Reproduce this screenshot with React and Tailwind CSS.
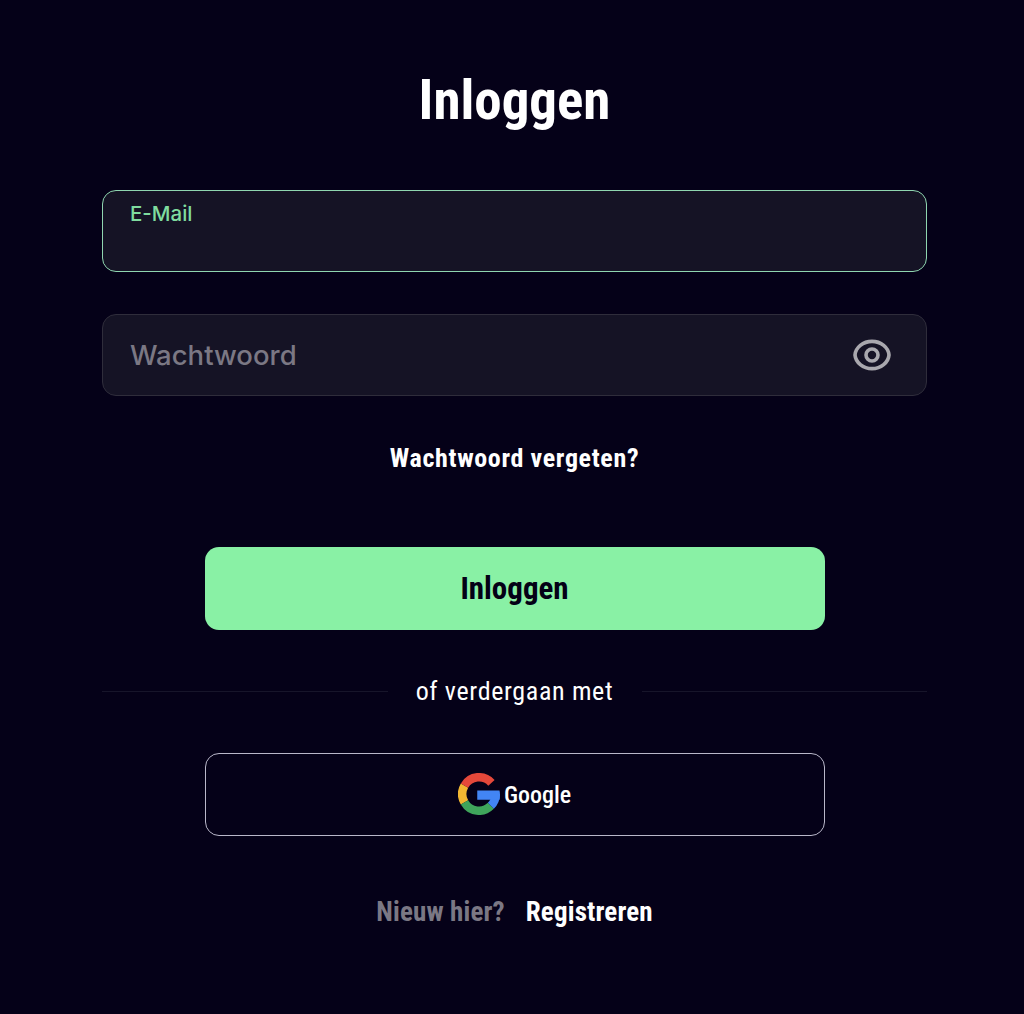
import React, { useState } from 'react';

const EyeIcon = () => (
    <svg width="38" height="38" viewBox="0 0 38 38" fill="none" stroke="#a9a8ae" strokeWidth="3.6" strokeLinejoin="round">
        <path d="M2 19C2.6 11.6 10 5.4 19 5.4S35.4 11.6 36 19C35.4 26.4 28 32.6 19 32.6S2.6 26.4 2 19Z" />
        <circle cx="19" cy="19" r="6" />
    </svg>
);

const GoogleLogo = () => (
    <svg width="42" height="42" viewBox="0 0 48 48" fill="none" strokeWidth="9.7" className="mb-[2px]">
        <path stroke="#F2B632" d="M7.42 14.43A19.15 19.15 0 0 0 7.42 33.57" />
        <path stroke="#3FA55B" d="M7.42 33.57A19.15 19.15 0 0 0 37.54 37.54" />
        <path stroke="#4285F4" d="M37.54 37.54A19.15 19.15 0 0 0 43.15 24" />
        <path fill="#4285F4" stroke="none" d="M22 20H47.4C47.8 21.5 48 23 48 24.5L47.6 30.5H22Z" />
        <path stroke="#E5483A" d="M7.42 14.43A19.15 19.15 0 0 1 38.23 11.19" />
    </svg>
);

const App = () => {
    const [email, setEmail] = useState('');
    const [password, setPassword] = useState('');

    return (
        <div className="min-h-[1014px] bg-[#050118] font-['Roboto',sans-serif] text-white [font-stretch:75%]">
            <div className="ml-[102px] flex w-[825px] flex-col">
                <h1 className="mt-[66px] h-[68px] text-center text-[55px] leading-[68px] font-bold">
                    Inloggen
                </h1>

                <label className="relative mt-[56px] block h-[82px] rounded-[14px] border border-[#8fd6b0] bg-[#151325] px-[27px]">
                    <span className="absolute top-[11px] left-[27px] font-['Inter',sans-serif] text-[20.5px] leading-[24px] font-medium text-[#7fdc9f]">
                        E-Mail
                    </span>
                    <input
                        value={email}
                        onChange={(e) => setEmail(e.target.value)}
                        className="mt-[36px] h-[36px] w-full bg-transparent font-['Inter',sans-serif] text-[20px] outline-none"
                    />
                </label>

                <div className="mt-[42px] flex h-[82px] items-center rounded-[14px] border border-[#2f2d3b] bg-[#151325] pr-[35px] pl-[27px]">
                    <input
                        value={password}
                        onChange={(e) => setPassword(e.target.value)}
                        placeholder="Wachtwoord"
                        className="mt-[2px] min-w-0 flex-1 bg-transparent font-['Inter',sans-serif] text-[27.5px] font-medium outline-none placeholder:text-[#7b7884]"
                    />
                    <button type="button">
                        <EyeIcon />
                    </button>
                </div>

                <a className="mt-[46px] block h-[32px] text-center text-[26px] leading-[32px] font-bold tracking-[0.65px]">
                    Wachtwoord vergeten?
                </a>

                <button className="mx-auto mt-[73px] h-[83px] w-[620px] rounded-[14px] bg-[#89f1a5] pt-[2px] text-[31px] font-bold text-[#040116]">
                    Inloggen
                </button>

                <div className="mt-[43px] flex h-[36px] items-center">
                    <div className="h-px flex-1 bg-[#17152a]" />
                    <span className="w-[254px] text-center text-[26px] leading-[36px] tracking-[0.65px] whitespace-nowrap">
                        of verdergaan met
                    </span>
                    <div className="h-px flex-1 bg-[#17152a]" />
                </div>

                <button className="mx-auto mt-[44px] flex h-[83px] w-[620px] items-center justify-center gap-[4px] rounded-[14px] border border-[#b9b7c9]">
                    <GoogleLogo />
                    <span className="text-[24px] font-[480]">Google</span>
                </button>

                <div className="mt-[58px] flex h-[36px] items-center justify-center gap-[21px] text-[27px] font-bold tracking-[0.15px]">
                    <span className="whitespace-nowrap text-[#7b7884]">Nieuw hier?</span>
                    <a className="whitespace-nowrap">Registreren</a>
                </div>
            </div>
        </div>
    );
};

export default App;
